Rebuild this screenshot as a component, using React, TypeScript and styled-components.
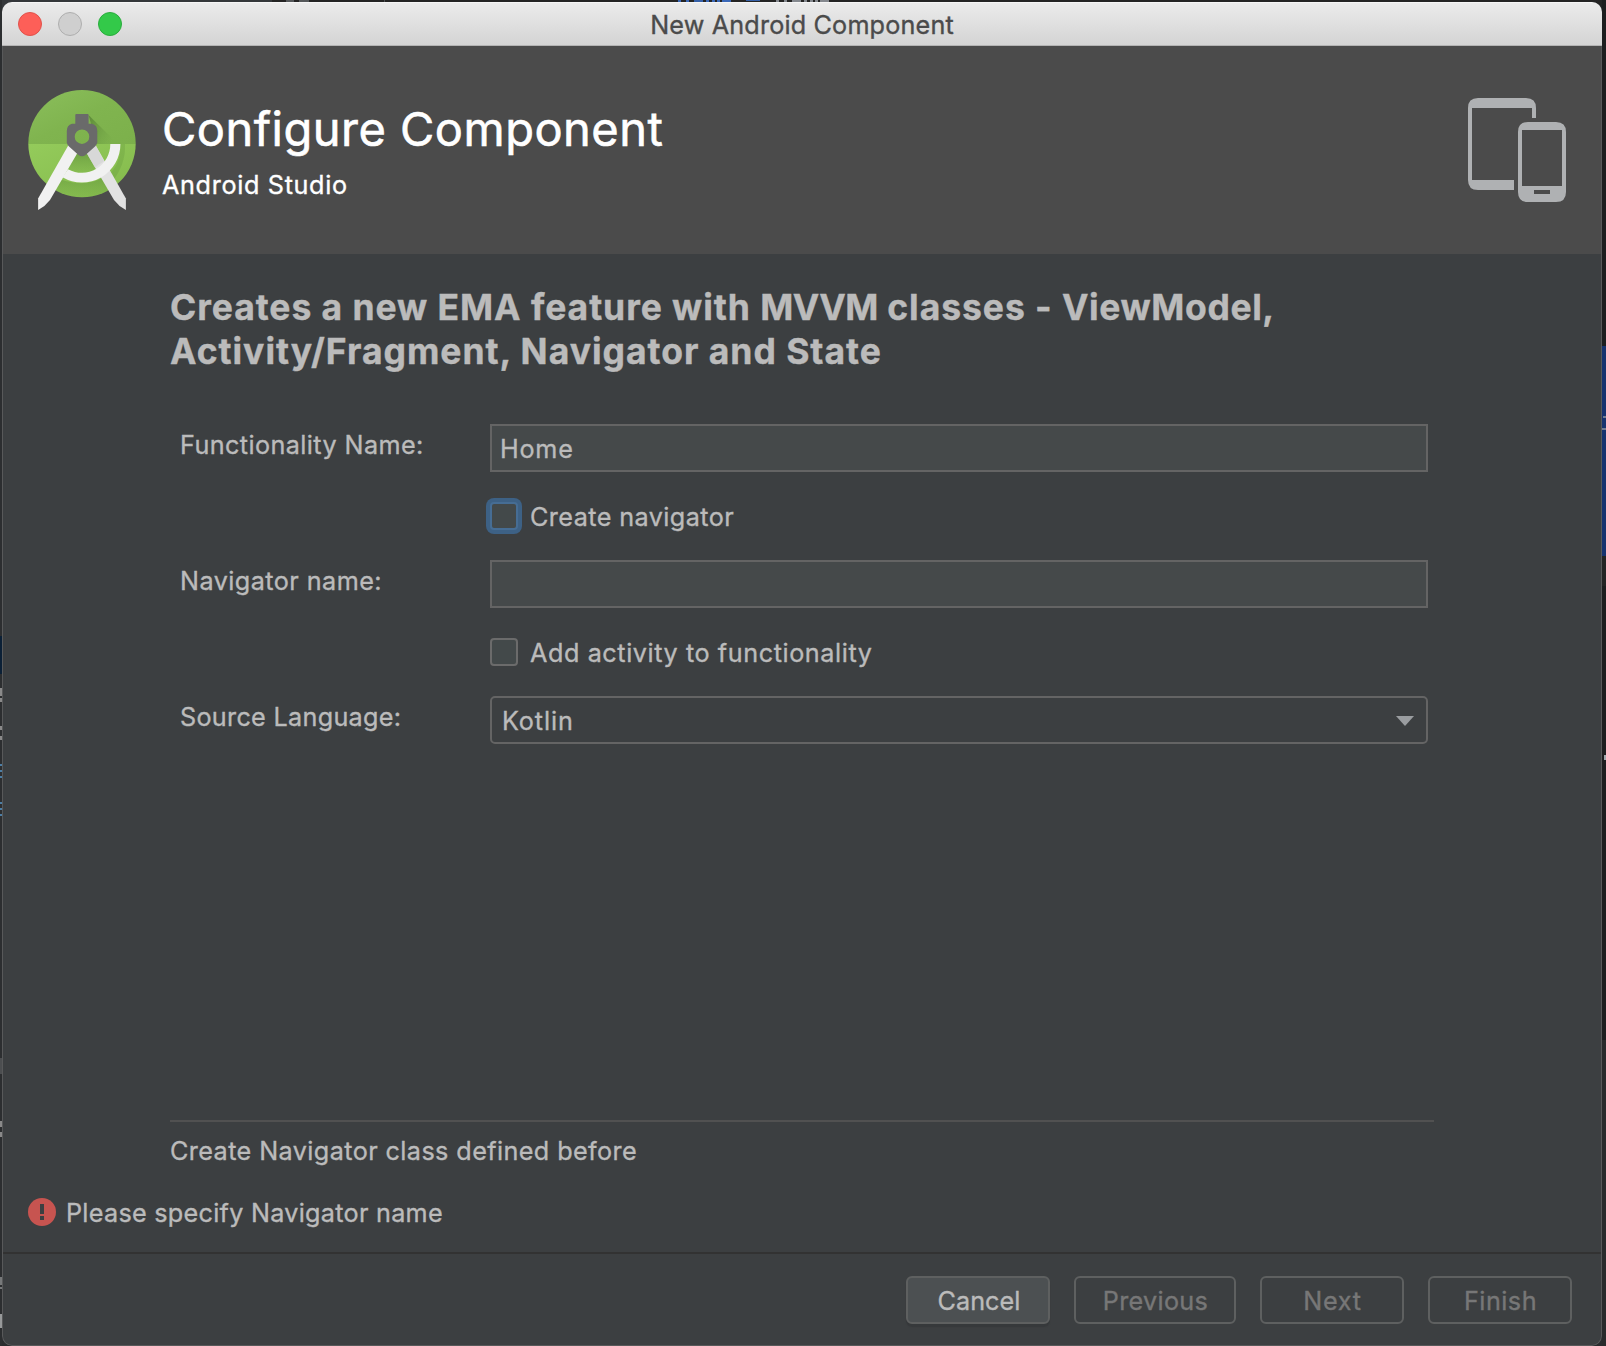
import React from "react";
import styled, { createGlobalStyle, css } from "styled-components";

const GlobalStyle = createGlobalStyle`
  *, *::before, *::after { box-sizing: border-box; }
  body {
    margin: 0;
    background: #242627;
    font-family: Inter, "Liberation Sans", sans-serif;
    overflow: hidden;
  }
`;

const palette = {
  text: "#bbbbbb",
  disabled: "#777777",
  panel: "#3c3f41",
  field: "#45494a",
  border: "#646464",
  edge: "#58595a",
};

/* One solid rectangle of the editor that shows behind the dialog. */
const patch = (x: string, y: number, w: number, h: number, color: string) =>
  `linear-gradient(${color}, ${color}) ${x} ${y}px / ${w}px ${h}px no-repeat`;

const editorPatches = [
  // letters of a code line, cut off by the top edge of the dialog
  patch("678px", 0, 3, 2, "#3a68b8"),
  patch("686px", 0, 3, 2, "#3a68b8"),
  patch("694px", 0, 9, 2, "#3560a8"),
  patch("706px", 0, 3, 2, "#3a68b8"),
  patch("712px", 0, 3, 2, "#3a68b8"),
  patch("717px", 0, 3, 2, "#3a68b8"),
  patch("722px", 0, 9, 2, "#3a68b8"),
  patch("746px", 0, 14, 1, "#3560a8"),
  patch("776px", 0, 3, 2, "#85898f"),
  patch("784px", 0, 3, 2, "#85898f"),
  patch("792px", 0, 9, 2, "#85898f"),
  patch("804px", 0, 3, 2, "#85898f"),
  patch("810px", 0, 3, 2, "#85898f"),
  patch("815px", 0, 3, 2, "#85898f"),
  patch("820px", 0, 9, 2, "#85898f"),
  patch("286px", 0, 8, 2, "#55585a"),
  patch("299px", 0, 10, 2, "#55585a"),
  patch("384px", 0, 1, 2, "#4c4f50"),
  // left edge
  patch("0px", 636, 2, 38, "#0b2036"),
  patch("0px", 688, 2, 8, "#8a8a8a"),
  patch("0px", 698, 2, 4, "#8a8a8a"),
  patch("0px", 726, 2, 4, "#8a8a8a"),
  patch("0px", 736, 2, 4, "#8a8a8a"),
  patch("0px", 764, 2, 2, "#4d7fa6"),
  patch("0px", 770, 2, 2, "#4d7fa6"),
  patch("0px", 776, 2, 2, "#4d7fa6"),
  patch("0px", 802, 2, 2, "#4d7fa6"),
  patch("0px", 808, 2, 2, "#4d7fa6"),
  patch("0px", 814, 2, 2, "#4d7fa6"),
  patch("0px", 1058, 2, 16, "#4c4e50"),
  patch("0px", 1121, 2, 6, "#8a8a8a"),
  patch("0px", 1132, 2, 5, "#8a8a8a"),
  patch("0px", 1277, 2, 8, "#77797a"),
  patch("0px", 1287, 2, 2, "#77797a"),
  patch("0px", 1314, 2, 14, "#97999a"),
  patch("0px", 0, 2, 1346, "#2c2e30"),
  // right edge
  patch("1603px", 416, 3, 2, "#707c94"),
  patch("1602px", 428, 4, 2, "#707c94"),
  patch("1602px", 346, 4, 210, "#17336f"),
  patch("1604px", 755, 2, 5, "#a0a8ac"),
  patch("1602px", 1040, 4, 306, "#292b2c"),
  patch("1602px", 556, 4, 30, "#242424"),
  patch("1602px", 0, 4, 1040, "#1d1e1f"),
  // editor tabs
  patch("0px", 0, 272, 12, "#34373a"),
  patch("272px", 0, 1334, 12, "#242424"),
].join(", ");

const Desktop = styled.main`
  display: flex;
  width: 1606px;
  height: 1346px;
  padding: 2px 4px 0 2px;
  background: ${editorPatches}, #2a2c2e;
`;

const Window = styled.section`
  flex: 1;
  display: flex;
  flex-direction: column;
  border-radius: 10px;
  overflow: hidden;
  background: ${palette.panel};
  color: ${palette.text};
`;

const TitleBar = styled.header`
  flex: none;
  height: 44px;
  display: grid;
  grid-template-columns: 1fr auto 1fr;
  align-items: center;
  padding: 0 16px;
  background: linear-gradient(#ebebeb, #d4d4d4);
  border-top: 1px solid #f6f6f6;
  border-bottom: 1px solid #b4b4b4;
`;

const Lights = styled.div`
  display: flex;
  gap: 16px;
`;

const Light = styled.span<{ $fill: string; $ring: string }>`
  width: 24px;
  height: 24px;
  border-radius: 50%;
  background: ${(p) => p.$fill};
  border: 1px solid ${(p) => p.$ring};
`;

interface TypeProps {
  $spacing?: number;
}

const typeBase = css<TypeProps>`
  font-size: 25.2px;
  line-height: 32px;
  letter-spacing: ${(p) => p.$spacing ?? 0.45}px;
  white-space: nowrap;
  -webkit-text-stroke: 0.35px currentColor;
`;

const WindowTitle = styled.h1<TypeProps>`
  ${typeBase}
  margin: 0;
  padding-top: 2px;
  font-weight: 400;
  color: #4b4b4b;
`;

const Content = styled.div`
  flex: 1;
  display: flex;
  flex-direction: column;
  border: 1px solid ${palette.edge};
  border-top: 0;
  border-radius: 0 0 10px 10px;
`;

const Banner = styled.div`
  flex: none;
  height: 208px;
  display: flex;
  align-items: flex-start;
  padding: 0 35px 0 25px;
  background: #4b4b4b;
  color: #ffffff;
`;

const Logo = styled.svg`
  flex: none;
  width: 108px;
  height: 124px;
  margin-top: 42px;
`;

const BannerText = styled.div`
  flex: 1;
  padding: 55px 0 0 26px;
`;

const BannerTitle = styled.h2`
  margin: 0 0 12px;
  font-size: 47px;
  line-height: 56px;
  font-weight: 400;
  letter-spacing: 0.48px;
  -webkit-text-stroke: 0.6px currentColor;
`;

const BannerSubtitle = styled.p<TypeProps>`
  ${typeBase}
  margin: 0;
`;

const Devices = styled.svg`
  flex: none;
  width: 98px;
  height: 104px;
  margin-top: 52px;
`;

const Page = styled.div`
  flex: 1;
  display: flex;
  flex-direction: column;
  padding: 32px 167px 0;
`;

const Heading = styled.h3`
  margin: 0 0 50px;
  font-size: 35.5px;
  line-height: 44px;
  font-weight: 700;
  -webkit-text-stroke: 0.4px currentColor;
`;

const HeadingLine = styled.span<TypeProps>`
  display: block;
  white-space: nowrap;
  letter-spacing: ${(p) => p.$spacing}px;
`;

const Tracked = styled.span<TypeProps>`
  letter-spacing: ${(p) => p.$spacing}px;
`;

const Form = styled.form`
  display: grid;
  grid-template-columns: 310px 938px;
  grid-template-rows: 48px 88px 48px 88px 48px;
  padding-left: 10px;
`;

const Label = styled.label<TypeProps>`
  ${typeBase}
  padding-top: 5px;
`;

const Field = styled.div<TypeProps>`
  ${typeBase}
  display: flex;
  align-items: center;
  padding: 2px 8px 0;
  background: ${palette.field};
  border: 2px solid ${palette.border};
`;

const Select = styled.div<TypeProps>`
  ${typeBase}
  display: flex;
  align-items: center;
  justify-content: space-between;
  padding: 0 12px 0 10px;
  border: 2px solid ${palette.border};
  border-radius: 5px;
`;

const SelectValue = styled.span`
  padding-top: 2px;
`;

const Arrow = styled.svg`
  width: 18px;
  height: 10px;
  margin-top: 2px;
`;

const CheckRow = styled.label<TypeProps>`
  ${typeBase}
  grid-column: 2;
  display: flex;
  align-items: center;
  gap: 12px;
`;

const Box = styled.span<{ $focused?: boolean }>`
  width: 28px;
  height: 28px;
  border-radius: 4px;
  background: #43494a;
  border: 2px solid ${(p) => (p.$focused ? "#466d94" : "#6b6b6b")};
  box-shadow: ${(p) => (p.$focused ? "0 0 0 4px #3d6185" : "none")};
`;

const CheckText = styled.span`
  padding-top: 2px;
`;

const Hint = styled.p<TypeProps>`
  ${typeBase}
  width: 1264px;
  margin: auto 0 0;
  padding: 13px 0 31px;
  border-top: 2px solid #515151;
`;

const ErrorRow = styled.div<TypeProps>`
  ${typeBase}
  flex: none;
  height: 54px;
  display: flex;
  align-items: flex-start;
  gap: 10px;
  padding: 0 0 0 25px;
`;

const ErrorIcon = styled.svg`
  width: 28px;
  height: 28px;
`;

const ErrorText = styled.span`
  margin-top: -1px;
`;

const Footer = styled.footer`
  flex: none;
  height: 93px;
  display: flex;
  justify-content: flex-end;
  gap: 24px;
  padding: 22px 29px 0 0;
  border-top: 2px solid #323232;
`;

const Button = styled.button<TypeProps & { $width: number }>`
  ${typeBase}
  width: ${(p) => p.$width}px;
  height: 48px;
  padding: 2px 0 0 2px;
  font-family: inherit;
  text-align: center;
  color: ${palette.text};
  background: #4c5052;
  border: 2px solid #5e6060;
  border-radius: 6px;
  box-shadow: 0 3px 1px #36393b;

  &:disabled {
    padding-left: 1px;
    color: ${palette.disabled};
    background: transparent;
    box-shadow: none;
  }
`;

function StudioLogo() {
  return (
    <Logo viewBox="28 88 108 124" aria-hidden="true">
      <defs>
        <linearGradient id="upper" x1="0" y1="0" x2="1" y2="1">
          <stop offset="0" stopColor="#8bbf5c" />
          <stop offset="0.5" stopColor="#80b44f" />
          <stop offset="1" stopColor="#7cb04b" />
        </linearGradient>
        <linearGradient id="lower" x1="0" y1="0" x2="1" y2="1">
          <stop offset="0" stopColor="#94cb5b" />
          <stop offset="1" stopColor="#83b94b" />
        </linearGradient>
        <linearGradient id="shade" x1="0" y1="0" x2="1" y2="0.6">
          <stop offset="0" stopColor="#4f7a30" stopOpacity="0.75" />
          <stop offset="1" stopColor="#6b9c42" stopOpacity="0" />
        </linearGradient>
        <linearGradient id="drop" x1="0" y1="0" x2="0" y2="1">
          <stop offset="0" stopColor="#5d8f38" stopOpacity="0.75" />
          <stop offset="1" stopColor="#6b9c42" stopOpacity="0.15" />
        </linearGradient>
        <clipPath id="disc">
          <circle cx="82" cy="143.6" r="53.7" />
        </clipPath>
      </defs>
      <g clipPath="url(#disc)">
        <rect x="28" y="89" width="108" height="55" fill="url(#upper)" />
        <rect x="28" y="144" width="108" height="54" fill="url(#lower)" />
        <path d="M88.5 115L118 144H97z" fill="url(#shade)" />
        <path d="M72 150L82 156L92 150L99 167Q82 178 65 168z" fill="url(#drop)" />
        <path d="M52 176Q82 190 104 177L112 198H50z" fill="url(#drop)" opacity="0.7" />
        <path d="M120.5 144Q121 165 107 176L112 182Q126 164 125 144z" fill="#5d8f38" opacity="0.25" />
      </g>
      <path d="M86 152L95.5 145L125.9 198.5V209.9L119.6 206L114 200z" fill="#e2e2e2" />
      <path d="M86 152L95.5 145L104 161L95 167.5z" fill="#d4d4d4" opacity="0.7" />
      <path d="M68.5 145L78 152L50 200L44.4 206L38.1 209.9V198.5z" fill="#f1f1f1" />
      <path
        d="M110.3 144H120.4A38.5 38.5 0 0 1 62.5 177.3L68 169.2A28.5 28.5 0 0 0 110.3 144z"
        fill="#f1f1f1"
      />
      <path
        fillRule="evenodd"
        d="M75.3 115Q75.3 114 76.3 114H87.6Q88.6 114 88.6 115V123.8H92Q97.3 125 97.3 131V142.6Q97 144.4 95 146.5L85.5 155Q82 157.6 78.5 155L69 146.5Q67 144.4 66.8 142.6V131Q66.8 125 72 123.8H75.3zM82 129.4A7.3 7.3 0 1 0 82 144A7.3 7.3 0 1 0 82 129.4z"
        fill="#6a6a6a"
      />
    </Logo>
  );
}

function DeviceIcon() {
  return (
    <Devices viewBox="0 0 98 104" fill="#afb1b3" aria-hidden="true">
      <path d="M10 0H58Q68 0 68 10V20H64V10H4V82H46V92H10Q0 92 0 82V10Q0 0 10 0z" />
      <path
        fillRule="evenodd"
        d="M60 24H88Q98 24 98 34V94Q98 104 88 104H60Q50 104 50 94V34Q50 24 60 24zM54 32V88H94V32zM66 92H82V96H66z"
      />
    </Devices>
  );
}

export default function App() {
  return (
    <>
      <GlobalStyle />
      <Desktop>
        <Window>
          <TitleBar>
            <Lights>
              <Light $fill="#fd5f58" $ring="#e0524b" />
              <Light $fill="#cfcfcf" $ring="#aeaeae" />
              <Light $fill="#33c949" $ring="#2aac3d" />
            </Lights>
            <WindowTitle $spacing={0.17}>New Android Component</WindowTitle>
          </TitleBar>
          <Content>
            <Banner>
              <StudioLogo />
              <BannerText>
                <BannerTitle>Configure Component</BannerTitle>
                <BannerSubtitle $spacing={0.67}>Android Studio</BannerSubtitle>
              </BannerText>
              <DeviceIcon />
            </Banner>
            <Page>
              <Heading>
                <HeadingLine $spacing={0.94}>
                  Creates a new EMA feature with <Tracked $spacing={-0.5}>MVVM</Tracked> classes -{" "}
                  <Tracked $spacing={0.6}>ViewModel,</Tracked>
                </HeadingLine>
                <HeadingLine $spacing={0.98}>Activity/Fragment, Navigator and State</HeadingLine>
              </Heading>
              <Form>
                <Label $spacing={0.41}>Functionality Name:</Label>
                <Field $spacing={0.75}>Home</Field>
                <CheckRow $spacing={0.42}>
                  <Box $focused />
                  <CheckText>Create navigator</CheckText>
                </CheckRow>
                <Label $spacing={0.45}>Navigator name:</Label>
                <Field />
                <CheckRow $spacing={0.58}>
                  <Box />
                  <CheckText>Add activity to functionality</CheckText>
                </CheckRow>
                <Label $spacing={0.3}>Source Language:</Label>
                <Select $spacing={0.9}>
                  <SelectValue>Kotlin</SelectValue>
                  <Arrow viewBox="0 0 18 10" aria-hidden="true">
                    <path d="M0 0H18L9 10z" fill="#9a9da0" />
                  </Arrow>
                </Select>
              </Form>
              <Hint $spacing={0.41}>Create Navigator class defined before</Hint>
            </Page>
            <ErrorRow $spacing={0.28}>
              <ErrorIcon viewBox="0 0 28 28" aria-hidden="true">
                <circle cx="14" cy="14" r="14" fill="#c75450" />
                <path d="M12 6h4v10h-4zM12 18h4v4h-4z" fill="#3c3f41" />
              </ErrorIcon>
              <ErrorText>Please specify Navigator name</ErrorText>
            </ErrorRow>
            <Footer>
              <Button $width={144} $spacing={0.05}>Cancel</Button>
              <Button $width={162} $spacing={0.3} disabled>Previous</Button>
              <Button $width={144} $spacing={0.7} disabled>Next</Button>
              <Button $width={144} $spacing={0.5} disabled>Finish</Button>
            </Footer>
          </Content>
        </Window>
      </Desktop>
    </>
  );
}
